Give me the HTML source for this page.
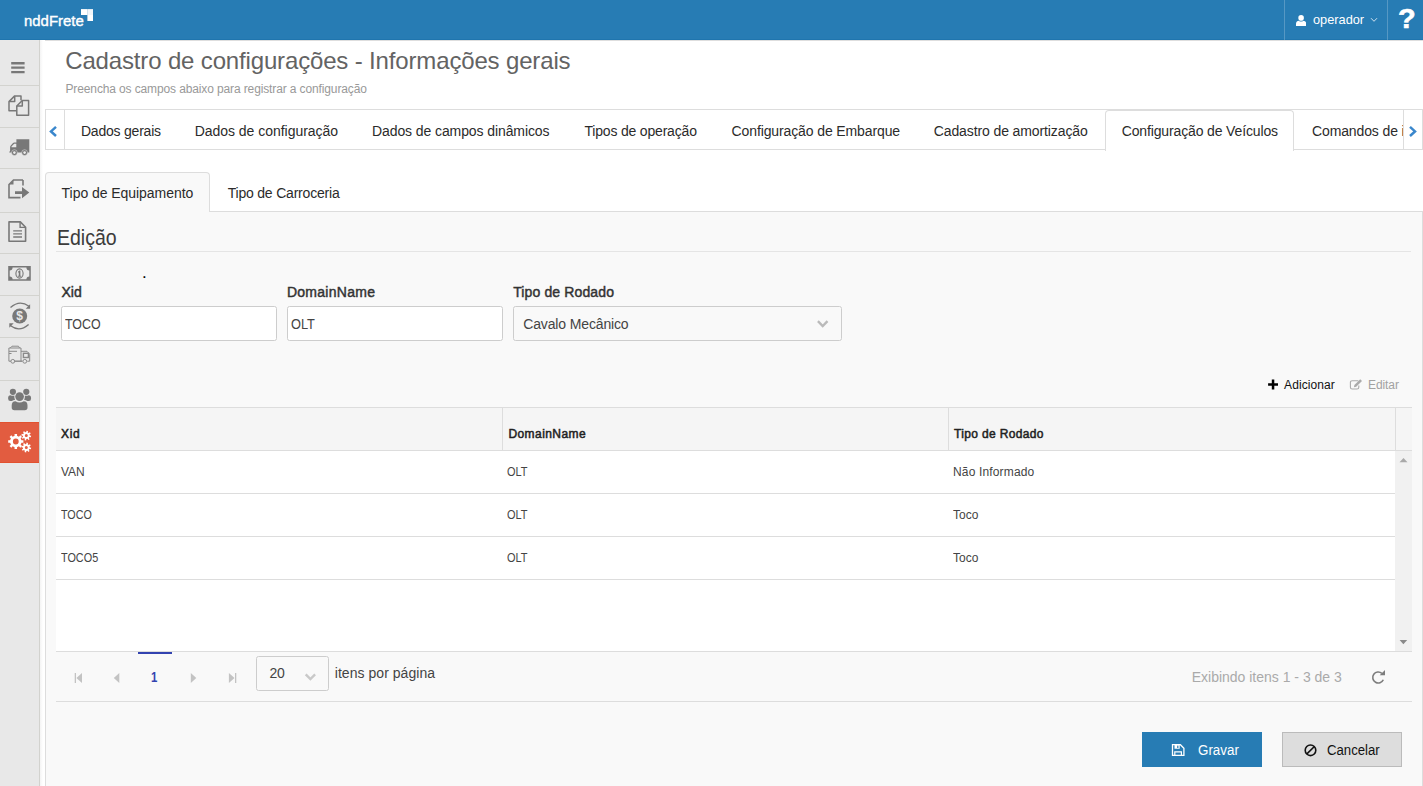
<!DOCTYPE html>
<html lang="pt-BR">
<head>
<meta charset="utf-8">
<title>nddFrete - Cadastro de configurações</title>
<style>
*{box-sizing:border-box;margin:0;padding:0}
html,body{width:1423px;height:786px;overflow:hidden;background:#fff}
body{font-family:"Liberation Sans",Arial,sans-serif;font-size:14px;color:#333;position:relative}
.abs{position:absolute}
span.t{position:absolute;white-space:nowrap;line-height:1;transform-origin:0 0}

/* top bar */
#topbar{position:absolute;left:0;top:0;width:1423px;height:40px;background:#277cb4;border-bottom:1px solid #1f75ae}
#topbar .sep{position:absolute;top:0;width:1px;height:40px;background:rgba(255,255,255,.22)}
#logo{font-size:15.500px;font-weight:normal;color:#fff;-webkit-text-stroke:0.4px #fff}
#user{font-size:13.5px;color:#fff}
#help{font-size:27px;font-weight:bold;color:#fff;-webkit-text-stroke:0.6px #fff}

/* sidebar */
#sidebar{position:absolute;left:0;top:40px;width:40px;height:746px;background:#e8e8e8;border-right:1px solid #d2d2ce}
#sidebar ul{list-style:none}
#sidebar li{position:absolute;left:0;width:39px;height:42px;border-bottom:1px solid #d3d3cf}
#sidebar li svg{position:absolute;display:block}
#sidebar li.active{background:#e25c40;border-top:1px solid #e2512f;border-bottom:1px solid #e2512f}
#sb8{border-bottom:0 !important}
#shade{position:absolute;left:40px;top:40px;width:3px;height:746px;background:linear-gradient(to right,#f4f4f4,#fff)}

/* headings */
h1,h2{font-weight:normal;font-size:inherit}
#title{font-size:24px;color:#636363}
#subtitle{font-size:12px;color:#999}

/* tab strip */
#tabstrip{position:absolute;left:45px;top:109px;width:1378px;height:41px;border:1px solid #ddd;background:#fff}
#tabstrip .btn{position:absolute;top:0;width:19px;height:39px;background:#fff}
#tabstrip .btn.l{left:0;border-right:1px solid #ddd}
#tabstrip .btn.r{right:0;border-left:1px solid #ddd}
#tabactive{position:absolute;left:1105px;top:110px;width:189px;height:41px;background:#fff;border:1px solid #ddd;border-bottom:0;border-radius:4px 4px 0 0}
.tab{font-size:14px;color:#2b2b2b}

/* sub tabs */
#subactive{position:absolute;left:45px;top:172px;width:165px;height:40px;background:#f9f9f9;border:1px solid #ddd;border-bottom:0;border-radius:4px 4px 0 0}
#panel{position:absolute;left:45px;top:211px;width:1378px;height:600px;background:#f9f9f9;border:1px solid #ddd}
#subactive-cover{position:absolute;left:46px;top:211px;width:163px;height:1px;background:#f9f9f9}

#edicao{font-size:21.500px;color:#3c3c3c}
#hr{position:absolute;left:56px;top:251px;width:1355px;height:1px;background:#e5e5e5}
.lbl{font-size:14px;font-weight:normal;color:#333;-webkit-text-stroke:0.45px #333}
.inp{position:absolute;top:306px;height:35px;background:#fff;border:1px solid #cdcdcd;border-radius:2.500px}
.inp.dd{background:#f9f9f9}
.val{font-size:14px;color:#444}

/* grid */
#grid{position:absolute;left:56px;top:407px;width:1356px;height:295px;background:#fff}
#ghead{position:absolute;left:0;top:0;width:1356px;height:44px;background:#f5f5f5;border-top:1px solid #ddd;border-bottom:1px solid #ddd}
#ghead .cs{position:absolute;top:0;width:1px;height:42px;background:#ddd}
.grow{position:absolute;left:0;width:1339px;height:43px;border-bottom:1px solid #ddd;background:#fff}
#gscroll{position:absolute;left:1339px;top:44px;width:17px;height:200px;background:#f1f1f1}
#pager{position:absolute;left:0;top:244px;width:1356px;height:51px;background:#f9f9f9;border-top:1px solid #ddd;border-bottom:1px solid #ddd}
.gh{font-size:12px;font-weight:normal;color:#222;-webkit-text-stroke:0.5px #222}
.gc{font-size:12px;color:#444}

.btnx{position:absolute;top:732px;width:120px;height:35px}
#gravar{left:1142px;background:#277cb4}
#cancelar{left:1282px;background:#ddd;border:1px solid #bbb}
/*FIT-START*/
#logo{left:24.10px;top:13.00px;letter-spacing:0.000px;transform:scaleX(0.9623)}
#user{left:1312.64px;top:13.10px;letter-spacing:0.000px;transform:scaleX(0.9451)}
#help{left:1397.74px;top:6.00px;letter-spacing:0.000px;transform:scaleX(1.0714)}
#title{left:65.21px;top:49.00px;letter-spacing:-0.153px;transform:scaleX(1.0000)}
#subtitle{left:65.49px;top:83.00px;letter-spacing:-0.125px;transform:scaleX(1.0000)}
#tab1{left:80.99px;top:124.25px;letter-spacing:-0.221px;transform:scaleX(1.0000)}
#tab2{left:194.65px;top:124.25px;letter-spacing:-0.029px;transform:scaleX(1.0000)}
#tab3{left:371.99px;top:124.25px;letter-spacing:-0.092px;transform:scaleX(1.0000)}
#tab4{left:584.46px;top:124.25px;letter-spacing:-0.186px;transform:scaleX(1.0000)}
#tab5{left:731.59px;top:124.25px;letter-spacing:-0.116px;transform:scaleX(1.0000)}
#tab6{left:933.76px;top:124.25px;letter-spacing:-0.110px;transform:scaleX(1.0000)}
#tab7{left:1121.69px;top:124.25px;letter-spacing:-0.139px;transform:scaleX(1.0000)}
#tab8{left:1312.00px;top:124.25px;letter-spacing:-0.120px;transform:scaleX(1.0000)}
#stab1{left:61.61px;top:185.50px;letter-spacing:-0.050px;transform:scaleX(1.0000)}
#stab2{left:227.67px;top:185.50px;letter-spacing:-0.198px;transform:scaleX(1.0000)}
#edicao{left:56.63px;top:228.00px;letter-spacing:0.000px;transform:scaleX(0.9070)}
#dot{left:142.01px;top:264.00px;letter-spacing:0.000px;transform:scaleX(1.0000)}
#lbl1{left:61.52px;top:284.75px;letter-spacing:-0.001px;transform:scaleX(1.0000)}
#lbl2{left:286.88px;top:284.75px;letter-spacing:0.281px;transform:scaleX(1.0000)}
#lbl3{left:513.13px;top:284.75px;letter-spacing:0.132px;transform:scaleX(1.0000)}
#val1{left:65.32px;top:316.75px;letter-spacing:0.000px;transform:scaleX(0.8871)}
#val2{left:290.96px;top:316.75px;letter-spacing:0.000px;transform:scaleX(0.9131)}
#val3{left:523.23px;top:316.75px;letter-spacing:-0.139px;transform:scaleX(1.0000)}
#add{left:1284.10px;top:379.00px;letter-spacing:0.091px;transform:scaleX(1.0000)}
#edit{left:1368.05px;top:379.00px;letter-spacing:-0.091px;transform:scaleX(1.0000)}
#gh1{left:61.04px;top:428.00px;letter-spacing:0.676px;transform:scaleX(1.0000)}
#gh2{left:508.41px;top:428.00px;letter-spacing:0.434px;transform:scaleX(1.0000)}
#gh3{left:954.09px;top:428.00px;letter-spacing:0.345px;transform:scaleX(1.0000)}
#c11{left:61.03px;top:466.25px;letter-spacing:-0.088px;transform:scaleX(1.0000)}
#c12{left:506.84px;top:466.25px;letter-spacing:0.000px;transform:scaleX(0.9126)}
#c13{left:953.02px;top:466.25px;letter-spacing:0.155px;transform:scaleX(1.0000)}
#c21{left:61.05px;top:509.25px;letter-spacing:0.000px;transform:scaleX(0.8950)}
#c22{left:506.84px;top:509.25px;letter-spacing:0.000px;transform:scaleX(0.9126)}
#c23{left:952.92px;top:509.25px;letter-spacing:0.000px;transform:scaleX(0.9978)}
#c31{left:61.02px;top:552.25px;letter-spacing:0.000px;transform:scaleX(0.9037)}
#c32{left:506.84px;top:552.25px;letter-spacing:0.000px;transform:scaleX(0.9126)}
#c33{left:952.92px;top:552.25px;letter-spacing:0.000px;transform:scaleX(0.9978)}
#pg1{left:151.29px;top:670.00px;letter-spacing:0.000px;transform:scaleX(0.8135)}
#pgsz{left:269.59px;top:666.00px;letter-spacing:-0.297px;transform:scaleX(1.0000)}
#pgtxt{left:334.77px;top:666.00px;letter-spacing:0.043px;transform:scaleX(1.0000)}
#pginfo{left:1191.71px;top:670.30px;letter-spacing:-0.005px;transform:scaleX(1.0000)}
#bt1{left:1197.79px;top:742.61px;letter-spacing:0.000px;transform:scaleX(0.9547)}
#bt2{left:1326.81px;top:742.60px;letter-spacing:0.000px;transform:scaleX(0.9414)}
/*FIT-END*/
</style>
</head>
<body>

<header id="topbar">
  <span class="t" id="logo">nddFrete</span>
  <svg class="abs" style="left:80.600px;top:9px" width="12.500" height="12.300" viewBox="0 0 12.700 12.300"><rect x="0" y="0" width="6.300" height="6" fill="#fff"/><rect x="6.300" y="0" width="6.400" height="6" fill="#f1f6fa"/><rect x="6.500" y="6" width="6.200" height="6.300" fill="#fff"/></svg>
  <div class="sep" style="left:1284px"></div>
  <div class="sep" style="left:1387px"></div>
  <svg class="abs" style="left:1296.100px;top:14.800px" width="10.200" height="11.300" viewBox="0 0 11 12" preserveAspectRatio="none"><circle cx="5.5" cy="3.1" r="3" fill="#fff"/><path d="M0 12V9.2C0 7.2 1.6 6 3 6 3.8 6.6 4.6 6.9 5.5 6.9S7.2 6.6 8 6c1.400 0 3 1.200 3 3.200V12Q11 12 9.600 12H1.400Q0 12 0 12Z" fill="#fff"/></svg>
  <span class="t" id="user">operador</span>
  <svg class="abs" style="left:1370px;top:17px" width="8" height="6" viewBox="0 0 8 6"><path d="M1 1.200 4 4.300 7 1.200" fill="none" stroke="#cfe1ee" stroke-width="1"/></svg>
  <span class="t" id="help">?</span>
</header>

<nav id="sidebar">
  <ul>
    <li id="sb0" style="top:0px;height:46px"><svg style="left:11px;top:21px" width="14" height="13" viewBox="0 0 14 13"><path d="M0.200 1.100h13.400v2.300h-13.400zM0.200 5.500h13.400v2.300h-13.400zM0.200 9.900h13.400v2.300h-13.400z" fill="#787878"/></svg></li>
    <li id="sb1" style="top:46px;height:42px"><svg style="left:8px;top:9px" width="22" height="22" viewBox="0 0 22 22"><g fill="none" stroke="#787878" stroke-width="1.500" stroke-linejoin="round"><path d="M13 5.200V0.900H6.700L1 6.600V15.800H8.600"/><path d="M6.700 0.900V6.600H1"/><path d="M14.300 5.400H20.600V20.200H8.800V11.100Z"/><path d="M14.300 5.400V11.100H8.800"/></g></svg></li>
    <li id="sb2" style="top:88px;height:41px"><svg style="left:9px;top:11px" width="21" height="17" viewBox="0 0 21 17"><path d="M7.400 0.200H20.300V13.400H0.300V12.400H1.100V8.200Q1.100 7.200 1.800 6.400L3.800 4.200Q4.400 3.500 5.300 3.500H7.400ZM7.300 4.800H5.200L2.500 7.600V8.300H7.300Z" fill="#787878" fill-rule="evenodd"/><circle cx="5.400" cy="13.600" r="2.900" fill="#787878" stroke="#e8e8e8" stroke-width="0.500"/><circle cx="15.600" cy="13.600" r="2.900" fill="#787878" stroke="#e8e8e8" stroke-width="0.500"/><circle cx="5.400" cy="13.600" r="1.300" fill="#ececec"/><circle cx="15.600" cy="13.600" r="1.300" fill="#ececec"/></svg></li>
    <li id="sb3" style="top:129px;height:44px"><svg style="left:8px;top:10px" width="22" height="20" viewBox="0 0 22 20"><path d="M15 1V6.500M15 1H5.500L1 5.500V18.600H12.500" fill="none" stroke="#787878" stroke-width="1.600"/><path d="M1 5.500H5.500V1Z" fill="#787878"/><path d="M7 12.300H14V8L21.300 13.600 14 19.200V14.900H7Z" fill="#787878"/></svg></li>
    <li id="sb4" style="top:173px;height:41px"><svg style="left:8px;top:8px" width="19" height="22" viewBox="0 0 19 22"><path d="M1 0.900H12.300L17.600 6.200V20.200H1Z" fill="none" stroke="#787878" stroke-width="1.600" stroke-linejoin="round"/><path d="M12.100 1V6.400H17.500" fill="none" stroke="#787878" stroke-width="1.400"/><path d="M5.200 9.800h8.800M5.200 12.900h8.800M5.200 16h8.800" stroke="#787878" stroke-width="1.300"/></svg></li>
    <li id="sb5" style="top:214px;height:42px"><svg style="left:8px;top:12px" width="23" height="15" viewBox="0 0 23 15"><path d="M0.200 0.100H22.800V14.800H0.200ZM1.700 4.500V10.500A3 3 0 0 1 4.600 13.300H18.400A3 3 0 0 1 21.300 10.500V4.500A3 3 0 0 1 18.400 1.600H4.600A3 3 0 0 1 1.700 4.500Z" fill="#787878" fill-rule="evenodd"/><ellipse cx="11.500" cy="7.500" rx="3.600" ry="4.600" fill="none" stroke="#787878" stroke-width="1.100"/><path d="M10 5.800 11.300 4.600H12.400V9.700H13.300V10.700H9.800V9.700H10.800V6.300L10 6.800Z" fill="#787878"/></svg></li>
    <li id="sb6" style="top:256px;height:42px"><svg style="left:9px;top:6px" width="22" height="28" viewBox="0 0 22 28"><circle cx="10.700" cy="14" r="7.500" fill="#787878"/><path d="M1.500 5.600Q10.500 -2.500 20 4.200" fill="none" stroke="#787878" stroke-width="1.300"/><path d="M21.100 2.300V6.700H16.700Z" fill="#787878"/><path d="M19.600 22.400Q10.500 30.500 1.600 23.800" fill="none" stroke="#787878" stroke-width="1.300"/><path d="M0.300 25.700V21.300H4.700Z" fill="#787878"/><text x="10.700" y="18.300" text-anchor="middle" font-family="Liberation Sans,sans-serif" font-weight="bold" font-size="12" fill="#e8e8e8">$</text></svg></li>
    <li id="sb7" style="top:298px;height:43px"><svg style="left:8px;top:7px" width="23" height="19" viewBox="0 0 23 19"><g fill="none" stroke="#8a8a8a" stroke-width="1"><path d="M3 16.200H0.900V3H13V16.200H6.500"/><path d="M2.200 3 4 1.200H10.400L11.600 3"/><path d="M13 6.300H19L21.700 9.200V16.200H19.300M14.300 16.200H13"/><rect x="15.400" y="8.300" width="5" height="4.200" stroke-width="1.400"/><circle cx="4.800" cy="16.300" r="1.900"/><circle cx="16.800" cy="16.300" r="1.900"/><path d="M1 6.300H9M1 8.500H3.500M6.500 16.200H14.300" /></g></svg></li>
    <li id="sb8" style="top:341px;height:41px"><svg style="left:8px;top:7px" width="24" height="23" viewBox="0 0 24 23"><circle cx="11.600" cy="8.600" r="4.300" fill="#787878"/><path d="M3.700 17.500Q3.700 13.200 7.500 13.200 9.400 14.500 11.600 14.500T15.700 13.200Q19.500 13.200 19.500 17.500V19.600Q19.500 22.200 16.800 22.200H6.400Q3.700 22.200 3.700 19.600Z" fill="#787878"/><circle cx="4.900" cy="3.800" r="3.100" fill="#787878"/><circle cx="18.300" cy="3.800" r="3.100" fill="#787878"/><path d="M0.100 10.500Q0.100 7.300 2.500 7.300 4.500 8.200 6.300 7.600 6.100 9.600 7.100 11.800 5 12 3.900 13H2.400Q0.100 13 0.100 10.500Z" fill="#787878"/><path d="M23.100 10.500Q23.100 7.300 20.700 7.300 18.700 8.200 16.900 7.600 17.100 9.600 16.100 11.800 18.200 12 19.300 13H20.800Q23.100 13 23.100 10.500Z" fill="#787878"/></svg></li>
    <li id="sb9" style="top:382px;height:41px" class="active"><svg style="left:8px;top:7px" width="24" height="23" viewBox="0 0 24 23"><path d="M15.40 10.24 L15.40 12.76 L13.47 12.72 L12.67 14.65 L14.06 15.98 L12.28 17.76 L10.95 16.37 L9.02 17.17 L9.06 19.10 L6.54 19.10 L6.58 17.17 L4.65 16.37 L3.32 17.76 L1.54 15.98 L2.93 14.65 L2.13 12.72 L0.20 12.76 L0.20 10.24 L2.13 10.28 L2.93 8.35 L1.54 7.02 L3.32 5.24 L4.65 6.63 L6.58 5.83 L6.54 3.90 L9.06 3.90 L9.02 5.83 L10.95 6.63 L12.28 5.24 L14.06 7.02 L12.67 8.35 L13.47 10.28Z M4.90 11.50a2.90 2.90 0 1 0 5.80 0a2.90 2.90 0 1 0 -5.80 0Z" fill="#fff" fill-rule="evenodd"/><path d="M23.20 5.77 L22.88 7.35 L21.51 7.00 L20.80 8.04 L21.64 9.18 L20.30 10.07 L19.58 8.86 L18.34 9.10 L18.13 10.50 L16.55 10.18 L16.90 8.81 L15.86 8.10 L14.72 8.94 L13.83 7.60 L15.04 6.88 L14.80 5.64 L13.40 5.43 L13.72 3.85 L15.09 4.20 L15.80 3.16 L14.96 2.02 L16.30 1.13 L17.02 2.34 L18.26 2.10 L18.47 0.70 L20.05 1.02 L19.70 2.39 L20.74 3.10 L21.88 2.26 L22.77 3.60 L21.56 4.32 L21.80 5.56Z M16.80 5.60a1.50 1.50 0 1 0 3.00 0a1.50 1.50 0 1 0 -3.00 0Z" fill="#fff" fill-rule="evenodd"/><path d="M23.20 17.67 L22.88 19.25 L21.51 18.90 L20.80 19.94 L21.64 21.08 L20.30 21.97 L19.58 20.76 L18.34 21.00 L18.13 22.40 L16.55 22.08 L16.90 20.71 L15.86 20.00 L14.72 20.84 L13.83 19.50 L15.04 18.78 L14.80 17.54 L13.40 17.33 L13.72 15.75 L15.09 16.10 L15.80 15.06 L14.96 13.92 L16.30 13.03 L17.02 14.24 L18.26 14.00 L18.47 12.60 L20.05 12.92 L19.70 14.29 L20.74 15.00 L21.88 14.16 L22.77 15.50 L21.56 16.22 L21.80 17.46Z M16.80 17.50a1.50 1.50 0 1 0 3.00 0a1.50 1.50 0 1 0 -3.00 0Z" fill="#fff" fill-rule="evenodd"/></svg></li>
  </ul>
</nav>
<div id="shade"></div>
<div class="abs" id="topline" style="left:45px;top:40px;width:1378px;height:1px;background:#dedede"></div>

<main>
  <h1><span class="t" id="title">Cadastro de configurações - Informações gerais</span></h1>
  <p><span class="t" id="subtitle">Preencha os campos abaixo para registrar a configuração</span></p>

  <div id="tabstrip">
    <div class="btn l"></div>
    <div class="btn r"></div>
  </div>
  <div id="tabactive"></div>
  <span class="t tab" id="tab1">Dados gerais</span>
  <span class="t tab" id="tab2">Dados de configuração</span>
  <span class="t tab" id="tab3">Dados de campos dinâmicos</span>
  <span class="t tab" id="tab4">Tipos de operação</span>
  <span class="t tab" id="tab5">Configuração de Embarque</span>
  <span class="t tab" id="tab6">Cadastro de amortização</span>
  <span class="t tab" id="tab7">Configuração de Veículos</span>
  <span class="t tab" id="tab8">Comandos de integração</span>
  <div class="abs" id="tabnext" style="left:1403px;top:110px;width:19px;height:39px;background:#fff;border-left:1px solid #ddd"></div>
  <div class="abs" style="left:1422px;top:109px;width:1px;height:41px;background:#ddd"></div>

  <div id="panel"></div>
  <div id="subactive"></div>
  <span class="t tab" id="stab1">Tipo de Equipamento</span>
  <span class="t tab" id="stab2">Tipo de Carroceria</span>

  <h2><span class="t" id="edicao">Edição</span></h2>
  <div id="hr"></div>
  <span class="t" id="dot" style="font-size:17px;color:#000">.</span>

  <span class="t lbl" id="lbl1">Xid</span>
  <span class="t lbl" id="lbl2">DomainName</span>
  <span class="t lbl" id="lbl3">Tipo de Rodado</span>
  <div class="inp" style="left:61px;width:216px"></div>
  <div class="inp" style="left:287px;width:216px"></div>
  <div class="inp dd" style="left:513px;width:329px"></div>
  <span class="t val" id="val1">TOCO</span>
  <span class="t val" id="val2">OLT</span>
  <span class="t val" id="val3">Cavalo Mecânico</span>

  <span class="t" id="add" style="font-size:12px;color:#111">Adicionar</span>
  <span class="t" id="edit" style="font-size:12px;color:#a2a2a2">Editar</span>

  <div id="grid">
    <div id="ghead"><div class="cs" style="left:446px"></div><div class="cs" style="left:892px"></div><div class="cs" style="left:1339px"></div></div>
    <div class="grow" style="top:44px"></div>
    <div class="grow" style="top:87px"></div>
    <div class="grow" style="top:130px"></div>
    <div id="gscroll"></div>
    <div id="pager"></div>
  </div>
  <span class="t gh" id="gh1">Xid</span>
  <span class="t gh" id="gh2">DomainName</span>
  <span class="t gh" id="gh3">Tipo de Rodado</span>

  <span class="t gc" id="c11">VAN</span>
  <span class="t gc" id="c12">OLT</span>
  <span class="t gc" id="c13">Não Informado</span>
  <span class="t gc" id="c21">TOCO</span>
  <span class="t gc" id="c22">OLT</span>
  <span class="t gc" id="c23">Toco</span>
  <span class="t gc" id="c31">TOCO5</span>
  <span class="t gc" id="c32">OLT</span>
  <span class="t gc" id="c33">Toco</span>

  <div class="abs" style="left:138px;top:652px;width:34px;height:2px;background:#3343b0"></div>
  <span class="t" id="pg1" style="font-size:14px;font-weight:bold;color:#3343b0">1</span>
  <div class="inp dd" style="left:256px;top:656px;width:73px"></div>
  <span class="t val" id="pgsz">20</span>
  <span class="t val" id="pgtxt">itens por página</span>
  <span class="t" id="pginfo" style="font-size:14px;color:#aaa">Exibindo itens 1 - 3 de 3</span>

  <div class="btnx" id="gravar"></div>
  <div class="btnx" id="cancelar"></div>
  <span class="t" id="bt1" style="font-size:14px;color:#fff">Gravar</span>
  <span class="t" id="bt2" style="font-size:14px;color:#111">Cancelar</span>
  <!--ICONS-->
  <svg class="abs ic" style="left:48px;top:125px" width="10" height="13" viewBox="0 0 10 13"><path d="M8 1.800 3 6.400 8 11" fill="none" stroke="#3a87cc" stroke-width="2.500"/></svg>
  <svg class="abs ic" style="left:1408px;top:125px" width="10" height="13" viewBox="0 0 10 13"><path d="M2 1.800 7 6.400 2 11" fill="none" stroke="#3a87cc" stroke-width="2.500"/></svg>
  <svg class="abs ic" style="left:816px;top:319px" width="14" height="10" viewBox="0 0 14 10"><path d="M1.900 2.200 6.700 7 11.500 2.200" fill="none" stroke="#bababa" stroke-width="2.400"/></svg>
  <svg class="abs ic" style="left:304px;top:671.6px" width="14" height="10" viewBox="0 0 14 10"><path d="M1.700 2.400 6.400 7.100 11.100 2.400" fill="none" stroke="#c9c9c9" stroke-width="2.400"/></svg>
  <svg class="abs ic" style="left:1268px;top:379px" width="10" height="11" viewBox="0 0 10 11"><path d="M3.800 0.500h2.500v3.700h3.700v2.500H6.300v3.700H3.800V6.700H0.100V4.200h3.700z" fill="#000"/></svg>
  <svg class="abs ic" style="left:1349px;top:378px" width="14" height="12" viewBox="0 0 14 12"><path d="M9.300 2.700H3.200Q1.400 2.700 1.400 4.500V9.200Q1.400 11 3.200 11H8Q9.800 11 9.800 9.200V7.600" fill="none" stroke="#ababab" stroke-width="1.100"/><path d="M11.200 1.200 13 3 7.200 8.800 4.900 9.300 5.400 7Z" fill="#ababab"/></svg>
  <svg class="abs ic" style="left:74px;top:672px" width="9" height="12" viewBox="0 0 9 12"><path d="M0.700 1h1.300v10H0.700zM8 1v10L2.400 6z" fill="#c3c3c3"/></svg>
  <svg class="abs ic" style="left:113px;top:672px" width="7" height="12" viewBox="0 0 7 12"><path d="M6.300 1v10L0.800 6z" fill="#c3c3c3"/></svg>
  <svg class="abs ic" style="left:190px;top:672px" width="7" height="12" viewBox="0 0 7 12"><path d="M0.800 1v10L6.300 6z" fill="#c3c3c3"/></svg>
  <svg class="abs ic" style="left:228px;top:672px" width="9" height="12" viewBox="0 0 9 12"><path d="M7 1h1.300v10H7zM0.900 1v10L6.500 6z" fill="#c3c3c3"/></svg>
  <svg class="abs ic" style="left:1370px;top:669px" width="17" height="17" viewBox="0 0 17 17"><path d="M13.300 10.700A5.500 5.500 0 1 1 11.900 4.400" fill="none" stroke="#7d7d7d" stroke-width="1.600"/><path d="M15 1v5.200H9.700z" fill="#7d7d7d"/></svg>
  <svg class="abs ic" style="left:1171px;top:743px" width="15" height="14" viewBox="0 0 15 14"><path d="M1.500 1.700H9.400L12.900 5.200V12.400H1.500Z" fill="none" stroke="#fff" stroke-width="1.300" stroke-linejoin="miter"/><path d="M3.500 1.700h5.200v4H3.500zM6.200 2.500v2.400h1.200V2.500z" fill="#fff" fill-rule="evenodd"/><path d="M3.800 12.400V8.800h6.600v3.600" fill="none" stroke="#fff" stroke-width="1.200"/></svg>
  <svg class="abs ic" style="left:1303px;top:742.7px" width="15" height="15" viewBox="0 0 15 15"><circle cx="7.500" cy="7.300" r="5.300" fill="none" stroke="#111" stroke-width="1.600"/><path d="M3.900 10.900 11.100 3.700" stroke="#111" stroke-width="1.600"/></svg>
  <svg class="abs ic" style="left:1399px;top:457px" width="9" height="6" viewBox="0 0 9 6"><path d="M0.500 5.200 4.500 1 8.500 5.200z" fill="#a9a9a9"/></svg>
  <svg class="abs ic" style="left:1399px;top:639px" width="9" height="6" viewBox="0 0 9 6"><path d="M0.600 1 4.400 5.300 8.200 1z" fill="#8a8a8a"/></svg>
  <!--/ICONS-->
</main>

</body>
</html>
